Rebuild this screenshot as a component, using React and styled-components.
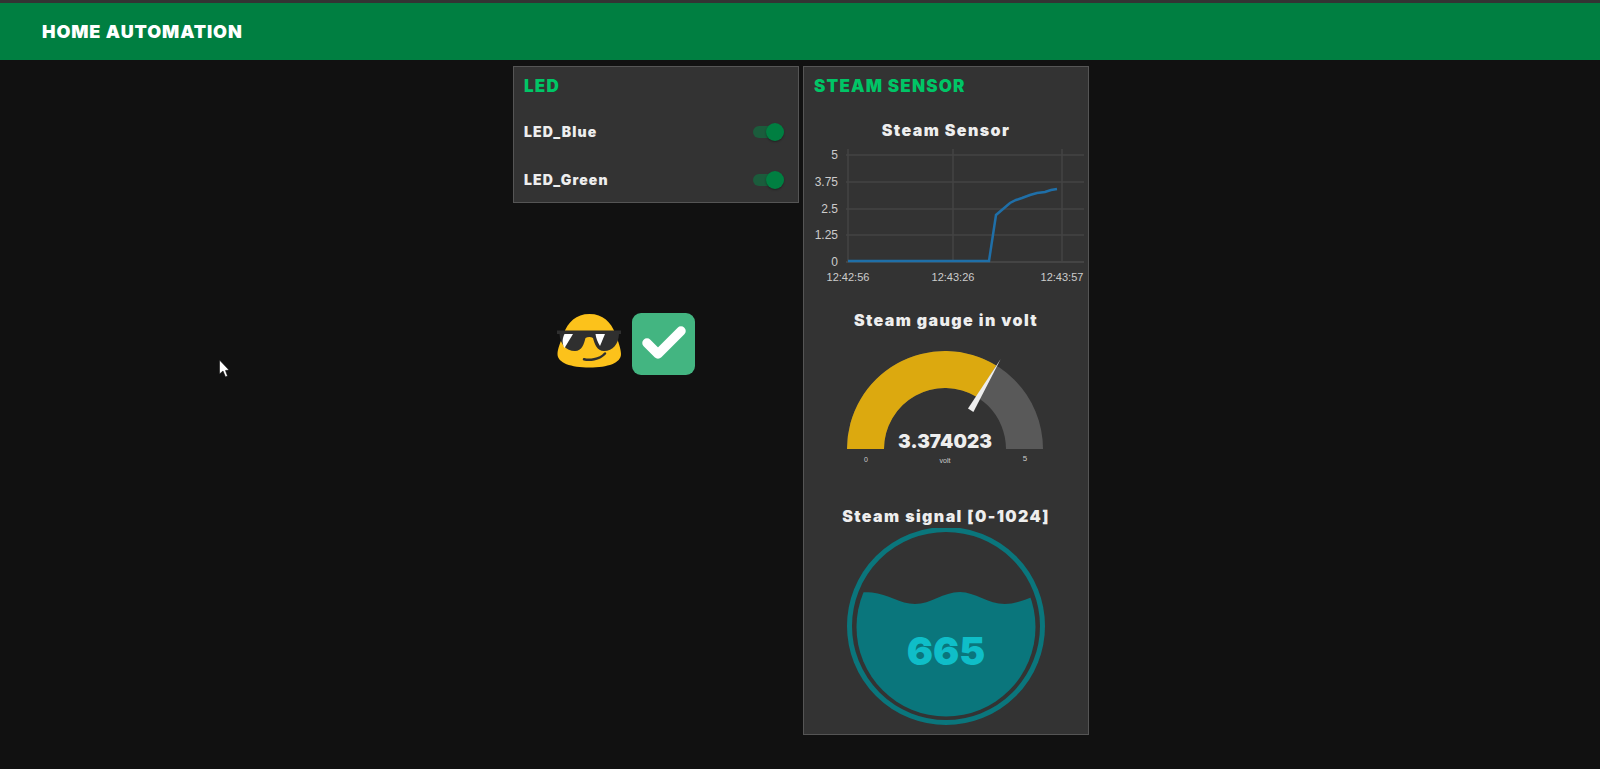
import React from "react";
import styled, { createGlobalStyle } from "styled-components";

const GlobalStyle = createGlobalStyle`
  html, body {
    margin: 0;
    padding: 0;
    height: 100%;
    background: #111111;
    overflow: hidden;
  }
  body {
    font-family: Inter, "Liberation Sans", Arial, sans-serif;
  }
`;

const Page = styled.div`
  position: relative;
  height: 769px;
  border-top: 3px solid #333333;
  box-sizing: border-box;
`;

const Toolbar = styled.header`
  height: 57px;
  background: #007f41;
  display: flex;
  align-items: center;
  padding-left: 42px;
  color: #ffffff;
  font-size: 18px;
  font-weight: 900;
  letter-spacing: 0.9px;
`;

const Main = styled.main`
  display: flex;
  justify-content: center;
  align-items: flex-start;
  gap: 4px;
  padding: 6px 0 0 2px;
`;

const Column = styled.div`
  width: 286px;
  display: flex;
  flex-direction: column;
`;

const Card = styled.section`
  box-sizing: border-box;
  width: 286px;
  background: #333333;
  border: 1px solid #555555;
  height: ${(p) => p.$height}px;
`;

const CardTitle = styled.h2`
  margin: 0;
  height: 38px;
  line-height: 38px;
  padding-left: 10px;
  font-size: 17px;
  font-weight: 900;
  letter-spacing: 1.2px;
  color: #00c566;
`;

const Row = styled.div`
  height: 38px;
  margin-top: ${(p) => p.$top}px;
  display: flex;
  align-items: center;
  justify-content: space-between;
  padding: 0 14px 0 10px;
  color: #eeeeee;
  font-size: 14px;
  font-weight: 900;
  letter-spacing: 1.1px;
`;

const Toggle = styled.span`
  position: relative;
  width: 31px;
  height: 12px;
  margin-top: 2px;
  border-radius: 6px;
  background: #1b5c3c;

  &::after {
    content: "";
    position: absolute;
    right: 0;
    top: -3px;
    width: 18px;
    height: 18px;
    border-radius: 50%;
    background: #007f41;
    box-shadow: 0 1px 2px rgba(0, 0, 0, 0.35);
  }
`;

const WidgetTitle = styled.h3`
  margin: ${(p) => p.$top || 0}px 0 0;
  height: 24px;
  line-height: 24px;
  text-align: center;
  color: #eeeeee;
  font-size: 16px;
  font-weight: 900;
  letter-spacing: 1.4px;
`;

const Drawing = styled.svg`
  display: block;
  width: 284px;
  height: ${(p) => p.$height}px;
  text {
    font-family: "Liberation Sans", Arial, sans-serif;
  }
  text.heavy {
    font-family: Inter, "Liberation Sans", Arial, sans-serif;
    font-weight: 900;
  }
`;

const Badges = styled.div`
  display: flex;
  align-items: center;
  gap: 10px;
  margin-top: 109px;
  padding-left: 43px;
`;

const CursorMark = styled.svg`
  position: absolute;
  left: 218px;
  top: 356px;
`;

const yTicks = [
  ["5", 155],
  ["3.75", 182],
  ["2.5", 209],
  ["1.25", 235],
  ["0", 262],
];

const xTicks = [
  ["12:42:56", 848],
  ["12:43:26", 953],
  ["12:43:57", 1062],
];

const linePoints =
  "848,261 989,261 996,215 1003,209 1010,203 1016,200 1022,198 1030,195 1037,193 1045,192 1051,190 1057,189";

function LineChart() {
  return (
    <Drawing $height={158} viewBox="804 142 284 158">
      {yTicks.map(([label, y]) => (
        <g key={label}>
          <line x1="846" x2="1084" y1={y} y2={y} stroke="#444444" strokeWidth={y === 262 ? 2 : 1.5} />
          <text x="838" y={y + 4} fill="#cccccc" fontSize="12" textAnchor="end">{label}</text>
        </g>
      ))}
      {xTicks.map(([label, x]) => (
        <g key={label}>
          <line x1={x} x2={x} y1="149" y2="262" stroke="#444444" strokeWidth="1.5" />
          <text x={x} y="281" fill="#cccccc" fontSize="11" textAnchor="middle">{label}</text>
        </g>
      ))}
      <polyline points={linePoints} fill="none" stroke="#1f6fa8" strokeWidth="2.5" />
    </Drawing>
  );
}

function SteamGauge() {
  return (
    <Drawing $height={172} viewBox="804 331 284 172">
      <path d="M847 448 A98 98 0 0 1 1043 448 L1006 448 A61 61 0 0 0 884 448 Z" fill="#595959" />
      <path d="M847 448 A98 98 0 0 1 996.2 364.4 L976.9 396 A61 61 0 0 0 884 448 Z" fill="#dca90f" />
      <polygon points="1000.7,358 973.4,411 968,407.6" fill="#eeeeee" />
      <text className="heavy" x="945" y="447" fill="#eeeeee" fontSize="19" textAnchor="middle">3.374023</text>
      <text x="866" y="461" fill="#cccccc" fontSize="7" textAnchor="middle">0</text>
      <text x="945" y="462" fill="#cccccc" fontSize="7" textAnchor="middle">volt</text>
      <text x="1025" y="460" fill="#cccccc" fontSize="8" textAnchor="middle">5</text>
    </Drawing>
  );
}

function SteamLiquid() {
  return (
    <Drawing $height={202} viewBox="804 528 284 202">
      <defs>
        <clipPath id="liquid-bowl">
          <circle cx="946" cy="627" r="89.5" />
        </clipPath>
      </defs>
      <circle cx="946" cy="626" r="96.5" fill="none" stroke="#0a767c" strokeWidth="5" />
      <path
        clipPath="url(#liquid-bowl)"
        d="M850 593 C858 592 866 592 872 592.500 C888 594 900 604 915 604 C931 604 943 592 960 592 C975 592 988 604 1005 604 C1016 604 1024 600 1040 594 L1040 720 L850 720 Z"
        fill="#0a767c"
      />
      <text className="heavy" x="946" y="665" fill="#0fbec8" fontSize="39" textAnchor="middle">665</text>
    </Drawing>
  );
}

function SunglassesEmoji() {
  return (
    <svg width="66" height="64" viewBox="0 -1 66 64">
      <path d="M33.500 1 C47 1 55 9 59.500 21 C62 28 65 36 65 41 C65 50 52 54.500 33.500 54.500 C15 54.500 1.500 50 1.500 41 C1.500 36 5 28 7.500 21 C12 9 20 1 33.500 1 Z" fill="#fcc21b" />
      <path d="M1 17.500 H65 V21 H63 C62.500 31 57 38 48 38 C41 38 38.500 31 37 25 C35 23.800 31.500 23.800 29.500 25 C28 31 26 38 19 38 C10 38 4 31 3.500 21 H1 Z" fill="#2f2f2f" />
      <path d="M8.500 21 H17 L8.500 35 C6 31 6 26 8.500 21 Z" fill="#ffffff" />
      <path d="M39.500 21 H49 L44 33 C41.500 29 40 25 39.500 21 Z" fill="#ffffff" />
      <path d="M28 46.300 C33 47.500 43 47 49 40.500" fill="none" stroke="#2f2f2f" strokeWidth="2.500" strokeLinecap="round" />
    </svg>
  );
}

function CheckBadge() {
  return (
    <svg width="63" height="62" viewBox="0 0 63 62">
      <rect width="63" height="62" rx="9" fill="#43b581" />
      <path d="M15 30 L26 41 L49 18" fill="none" stroke="#ffffff" strokeWidth="9.500" strokeLinecap="round" strokeLinejoin="round" />
    </svg>
  );
}

export default function App() {
  return (
    <Page>
      <GlobalStyle />
      <Toolbar>HOME AUTOMATION</Toolbar>
      <Main>
        <Column>
          <Card $height={137}>
            <CardTitle>LED</CardTitle>
            <Row $top={7}>
              LED_Blue
              <Toggle />
            </Row>
            <Row $top={10}>
              LED_Green
              <Toggle />
            </Row>
          </Card>
          <Badges>
            <SunglassesEmoji />
            <CheckBadge />
          </Badges>
        </Column>
        <Column>
          <Card $height={669}>
            <CardTitle>STEAM SENSOR</CardTitle>
            <WidgetTitle $top={13}>Steam Sensor</WidgetTitle>
            <LineChart />
            <WidgetTitle $top={8}>Steam gauge in volt</WidgetTitle>
            <SteamGauge />
            <WidgetTitle>Steam signal [0-1024]</WidgetTitle>
            <SteamLiquid />
          </Card>
        </Column>
      </Main>
      <CursorMark width="12" height="20" viewBox="0 0 12 20">
        <path d="M1.500 1 V15 L5 12 L7.500 18 L9.500 17 L7.500 11.500 L11 11 Z" fill="#ffffff" stroke="#111111" strokeWidth="0.6" />
      </CursorMark>
    </Page>
  );
}
